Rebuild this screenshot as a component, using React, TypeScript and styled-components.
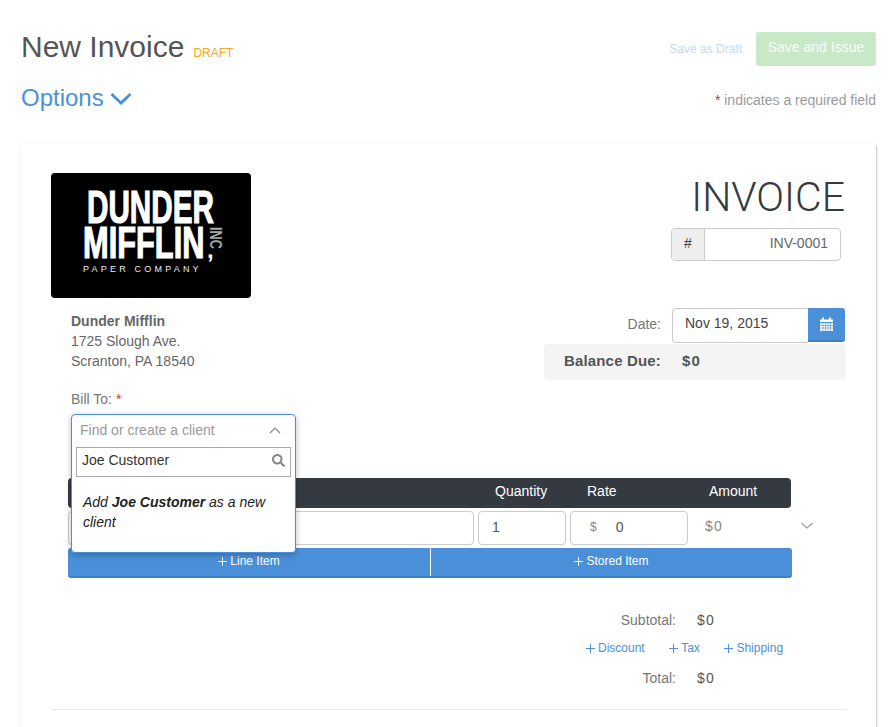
import React from "react";
import styled, { createGlobalStyle } from "styled-components";
import { FaSearch } from "react-icons/fa";

const Global = createGlobalStyle`
  html, body { margin: 0; padding: 0; background: #fff; }
  body { font-family: "Liberation Sans", Arial, sans-serif; font-size: 14px; color: #666; }
  * { box-sizing: border-box; }
`;

const Page = styled.div`
  width: 896px; height: 727px; overflow: hidden; padding: 32px 20px 0 21px;
`;
const HeaderTop = styled.div`
  display: flex; justify-content: space-between; align-items: flex-start; height: 34px;
`;
const TitleGroup = styled.div`display: flex; align-items: baseline; gap: 9px;`;
const Title = styled.h1`
  margin: 0; font-weight: 400; font-size: 30px; line-height: 30px; color: #555;
`;
const Draft = styled.span`font-size: 12px; color: #f5a623;`;
const Actions = styled.div`display: flex; align-items: center; gap: 14px;`;
const DraftLink = styled.span`font-size: 12px; color: #c4daf2; margin-top: -1px;`;
const IssueButton = styled.div`
  width: 120px; height: 34px; border-radius: 3px; background: #c9e8c8; color: #f6fbf5;
  font-size: 14px; line-height: 30px; text-align: center;
`;
const HeaderBottom = styled.div`
  display: flex; justify-content: space-between; align-items: center; height: 30px; margin-top: 17px;
`;
const Options = styled.div`
  display: flex; align-items: center; gap: 6px; color: #4a90d9; font-size: 24px; line-height: 30px;
`;
const Required = styled.span`font-size: 14px; color: #9b9b9b; margin-top: 4px;`;
const Star = styled.span`color: #c0392b;`;
const Card = styled.div`
  margin-top: 30px; height: 640px; border-radius: 4px; padding: 30px 30px 0;
  box-shadow: 1px 1px 2px rgba(0,0,0,.22), 0 0 2px rgba(0,0,0,.05);
  position: relative;
`;
const TopGrid = styled.div`display: flex; justify-content: space-between; height: 207px;`;
const LeftCol = styled.div`width: 200px;`;
const Logo = styled.svg`display: block; width: 200px; height: 125px; border-radius: 4px;`;
const Address = styled.div`
  margin: 13px 0 0 20px; width: 300px; font-size: 14px; line-height: 20px; color: #666;
`;
const Company = styled.div`font-weight: 700;`;
const RightCol = styled.div`display: flex; flex-direction: column; align-items: flex-end; width: 302px;`;
const InvoiceTitle = styled.div`
  font-family: Roboto, "Liberation Sans", sans-serif; font-weight: 300; font-size: 41px; line-height: 48px;
  color: #353a40; margin-right: 1px;
`;
const NumberGroup = styled.div`
  display: flex; width: 170px; height: 34px; margin: 7px 5px 0 0; border: 1px solid #ccc; border-radius: 4px; overflow: hidden;
`;
const NumberAddon = styled.div`
  width: 33px; background: #eee; border-right: 1px solid #ccc; text-align: center; line-height: 29px; color: #444; font-size: 14px;
`;
const NumberValue = styled.div`
  flex: 1; text-align: right; padding-right: 12px; line-height: 29px; color: #666; font-size: 14px;
`;
const DateRow = styled.div`
  display: flex; align-items: center; margin-top: 47px; height: 35px; width: 302px; justify-content: flex-end; padding-right: 1px;
`;
const DateLabel = styled.span`margin-right: 11px; color: #777; font-size: 14px; margin-top: -4px;`;
const DateInput = styled.div`
  width: 136px; height: 35px; border: 1px solid #ccc; border-right: 0; border-radius: 4px 0 0 4px; padding-left: 12px;
  line-height: 29px; color: #444; font-size: 14px;
`;
const CalendarButton = styled.div`
  width: 37px; height: 34px; background: #4a90d9; border-bottom: 2px solid #3f7fc4; border-radius: 0 3px 3px 0;
  display: flex; align-items: center; justify-content: center; align-self: flex-start;
`;
const Balance = styled.div`
  display: flex; width: 302px; height: 36px; margin-top: 1px; background: #f4f4f4; border-radius: 4px;
  font-weight: 700; font-size: 15px; line-height: 33px; color: #555; flex-shrink: 0;
`;
const BalanceLabel = styled.span`width: 117px; text-align: right; margin-right: 21px; letter-spacing: .17px;`;
const Money = styled.span`letter-spacing: 1.2px;`;
const BillLabel = styled.div`margin: 11px 0 0 20px; height: 16px; line-height: 16px; font-size: 14px; color: #777; position: relative;`;
const BillTo = styled.div`
  position: absolute; top: 23px; left: 0; width: 225px; height: 139px; background: #fff; border: 1px solid #4a90d9; border-radius: 4px;
  box-shadow: 0 2px 6px rgba(0,0,0,.25); z-index: 2; padding: 0 4px; color: #333;
`;
const SelectHead = styled.div`
  display: flex; justify-content: space-between; align-items: center; height: 32px; padding: 0 10px 2px 4px; color: #999; font-size: 14px;
`;
const SearchBox = styled.div`
  display: flex; justify-content: space-between; align-items: center; height: 30px; border: 1px solid #aaa;
  padding: 0 5px 4px 5px; font-size: 14px; color: #333;
`;
const AddHint = styled.div`
  margin: 15px 0 0 7px; font-size: 14px; line-height: 20px; font-style: italic; color: #222; width: 195px;
`;
const Items = styled.div`margin: 71px 0 0 17px; width: 745px;`;
const ItemHeader = styled.div`
  display: grid; grid-template-columns: 406px 88px 118px 1fr; column-gap: 4px; width: 723px; height: 30px; background: #353a42; border-radius: 4px;
  color: #fff; font-size: 14px; line-height: 27px;
`;
const HeadCell = styled.div<{ $pad: number }>`padding-left: ${p => p.$pad}px;`;
const ItemRow = styled.div`
  display: grid; grid-template-columns: 406px 88px 118px 1fr 12px; column-gap: 4px; margin-top: 3px; height: 34px; align-items: start;
`;
const Field = styled.div`
  height: 34px; border: 1px solid #ccc; border-radius: 4px; padding-left: 13px; line-height: 30px; color: #555; font-size: 14px;
`;
const RateField = styled(Field)`display: flex; gap: 19px; padding-left: 19px;`;
const RateUnit = styled.span`font-size: 12px; color: #888;`;
const AmountCell = styled.div`padding-left: 13px; line-height: 31px; color: #888; font-size: 14px; letter-spacing: 1.2px;`;
const RowChevron = styled.svg`display: block; margin: 11px 0 0 0;`;
const AddButtons = styled.div`
  display: flex; width: 724px; height: 30px; margin-top: 3px; background: #4a90d9; border-bottom: 2px solid #3f7fc4; border-radius: 3px; color: #fff; font-size: 12px;
`;
const AddBtn = styled.div<{ $w: number }>`
  width: ${p => p.$w}px; display: flex; align-items: center; justify-content: center; gap: 3px; padding-bottom: 2px; line-height: 14px;
  & + & { border-left: 1px solid #fff; }
`;
const Totals = styled.div`margin: 32px 0 0 0; display: flex; flex-direction: column; font-size: 14px;`;
const TotalRow = styled.div<{ $mt: number }>`
  display: flex; margin-top: ${p => p.$mt}px; height: 20px; line-height: 20px; padding-left: 494px;
`;
const TotalLabel = styled.span`width: 131px; text-align: right; color: #777; margin-right: 21px;`;
const TotalValue = styled.span`color: #555; letter-spacing: 1.2px;`;
const Charges = styled.div`
  display: flex; margin-top: 8px; height: 20px; padding-left: 535px; gap: 24.5px; color: #4a90d9; font-size: 12px; line-height: 20px;
`;
const Charge = styled.span`display: flex; align-items: center; gap: 3px;`;
const Divider = styled.hr`margin: 21px 0 0; border: 0; border-top: 1px solid #e8e8e8;`;

const Plus = ({ size = 9 }: { size?: number }) => (
  <svg width={size} height={size} viewBox="0 0 10 10"><path d="M5 0v10M0 5h10" stroke="currentColor" strokeWidth="1.1" /></svg>
);

const DunderLogo = () => (
  <Logo viewBox="0 0 200 125">
    <rect width="200" height="125" fill="#000" />
    <text transform="translate(36 50) scale(.645 1)" fontFamily="Liberation Sans" fontWeight="700" fontSize="46" fill="#fff" stroke="#fff" strokeWidth="1.2">DUNDER</text>
    <text transform="translate(32 85) scale(.7 1)" fontFamily="Liberation Sans" fontWeight="700" fontSize="44" fill="#fff" stroke="#fff" strokeWidth="1.2">MIFFLIN</text>
    <text x="156" y="85" fontFamily="Liberation Sans" fontWeight="700" fontSize="24" fill="#fff">,</text>
    <text transform="translate(159 54) rotate(90) scale(.75 1)" fontFamily="Liberation Sans" fontWeight="700" fontSize="17" fill="#aaa">INC</text>
    <text x="32" y="99" fontFamily="Liberation Sans" fontSize="9" fill="#eee" letterSpacing="3.2">PAPER COMPANY</text>
  </Logo>
);

const CalendarIcon = () => (
  <svg width="13" height="14" viewBox="0 0 13 14">
    <path d="M0 2.5h2V0.5h2v2h5V0.5h2v2h2V5H0z" fill="#fff" />
    <path d="M0 6h13v8H0z" fill="#fff" />
    <path d="M3 6v8M5.5 6v8M8 6v8M10.5 6v8M0 8.5h13M0 11h13" stroke="#4a90d9" strokeWidth=".6" />
  </svg>
);

export default function App() {
  return (
    <Page>
      <Global />
      <HeaderTop>
        <TitleGroup>
          <Title>New Invoice</Title>
          <Draft>DRAFT</Draft>
        </TitleGroup>
        <Actions>
          <DraftLink>Save as Draft</DraftLink>
          <IssueButton>Save and Issue</IssueButton>
        </Actions>
      </HeaderTop>
      <HeaderBottom>
        <Options>
          Options
          <svg width="22" height="13" viewBox="0 0 22 13"><path d="M1.5 2l9.5 9 9.5-9" fill="none" stroke="#4a90d9" strokeWidth="2.8" /></svg>
        </Options>
        <Required><Star>*</Star> indicates a required field</Required>
      </HeaderBottom>
      <Card>
        <TopGrid>
          <LeftCol>
            <DunderLogo />
            <Address>
              <Company>Dunder Mifflin</Company>
              <div>1725 Slough Ave.</div>
              <div>Scranton, PA 18540</div>
            </Address>
          </LeftCol>
          <RightCol>
            <InvoiceTitle>INVOICE</InvoiceTitle>
            <NumberGroup>
              <NumberAddon>#</NumberAddon>
              <NumberValue>INV-0001</NumberValue>
            </NumberGroup>
            <DateRow>
              <DateLabel>Date:</DateLabel>
              <DateInput>Nov 19, 2015</DateInput>
              <CalendarButton><CalendarIcon /></CalendarButton>
            </DateRow>
            <Balance>
              <BalanceLabel>Balance Due:</BalanceLabel>
              <Money>$0</Money>
            </Balance>
          </RightCol>
        </TopGrid>
        <BillLabel>
          Bill To: <Star>*</Star>
          <BillTo>
            <SelectHead>
              Find or create a client
              <svg width="12" height="7" viewBox="0 0 12 7"><path d="M1 6l5-5 5 5" fill="none" stroke="#888" strokeWidth="1.2" /></svg>
            </SelectHead>
            <SearchBox>
              Joe Customer
              <FaSearch size={13} color="#888" />
            </SearchBox>
            <AddHint>Add <b>Joe Customer</b> as a new client</AddHint>
          </BillTo>
        </BillLabel>
        <Items>
          <ItemHeader>
            <HeadCell $pad={0} />
            <HeadCell $pad={17}>Quantity</HeadCell>
            <HeadCell $pad={17}>Rate</HeadCell>
            <HeadCell $pad={17}>Amount</HeadCell>
          </ItemHeader>
          <ItemRow>
            <Field />
            <Field>1</Field>
            <RateField><RateUnit>$</RateUnit>0</RateField>
            <AmountCell>$0</AmountCell>
            <RowChevron width="12" height="7" viewBox="0 0 12 7"><path d="M.5 1l5.5 5 5.5-5" fill="none" stroke="#999" strokeWidth="1.1" /></RowChevron>
          </ItemRow>
          <AddButtons>
            <AddBtn $w={362}><Plus />Line Item</AddBtn>
            <AddBtn $w={362}><Plus />Stored Item</AddBtn>
          </AddButtons>
        </Items>
        <Totals>
          <TotalRow $mt={0}><TotalLabel>Subtotal:</TotalLabel><TotalValue>$0</TotalValue></TotalRow>
          <Charges>
            <Charge><Plus />Discount</Charge>
            <Charge><Plus />Tax</Charge>
            <Charge><Plus />Shipping</Charge>
          </Charges>
          <TotalRow $mt={10}><TotalLabel>Total:</TotalLabel><TotalValue>$0</TotalValue></TotalRow>
        </Totals>
        <Divider />
      </Card>
    </Page>
  );
}
